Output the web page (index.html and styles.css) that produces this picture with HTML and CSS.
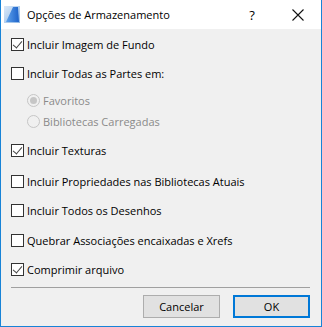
FILE: index.html
```html
<!DOCTYPE html>
<html lang="pt">
<head>
  <meta charset="UTF-8">
  <title>Opções de Armazenamento</title>
  <link rel="stylesheet" href="styles.css">
</head>
<body>
  <div class="dialog">
    <div class="titlebar">
      <svg class="app-icon" width="16" height="17" viewBox="0 0 16 17">
        <defs>
          <linearGradient id="bg" x1="0" y1="0" x2="1" y2="1">
            <stop offset="0" stop-color="#dbe9f8"/>
            <stop offset="1" stop-color="#8fb8e6"/>
          </linearGradient>
          <linearGradient id="sail" x1="0" y1="0" x2="1" y2="0">
            <stop offset="0" stop-color="#5fa3ec"/>
            <stop offset="1" stop-color="#1d62c9"/>
          </linearGradient>
        </defs>
        <rect x="0" y="0" width="16" height="17" fill="url(#bg)"/>
        <path d="M9 1 L14 1 L15 16 L2 16 Z" fill="url(#sail)"/>
      </svg>
      <span class="title">Opções de Armazenamento</span>
      <span class="help">?</span>
      <span class="close">
        <svg width="12" height="12" viewBox="0 0 12 12">
          <path d="M0.5 0.5 L11.5 11.5 M11.5 0.5 L0.5 11.5" stroke="#111" stroke-width="1.1"/>
        </svg>
      </span>
    </div>

    <div class="content">
      <div class="options">
        <div class="row r1"><span class="check on"></span>Incluir Imagem de Fundo</div>
        <div class="row r2"><span class="check"></span>Incluir Todas as Partes em:</div>
        <div class="row radio-row r3"><span class="radio on"></span>Favoritos</div>
        <div class="row radio-row r4"><span class="radio"></span>Bibliotecas Carregadas</div>
        <div class="row r5"><span class="check on"></span>Incluir Texturas</div>
        <div class="row r6"><span class="check"></span>Incluir Propriedades nas Bibliotecas Atuais</div>
        <div class="row r7"><span class="check"></span>Incluir Todos os Desenhos</div>
        <div class="row r8"><span class="check"></span>Quebrar Associações encaixadas e Xrefs</div>
        <div class="row r9"><span class="check on"></span>Comprimir arquivo</div>
      </div>
      <div class="separator"></div>
      <div class="buttons">
        <button class="btn">Cancelar</button>
        <button class="btn default">OK</button>
      </div>
    </div>
  </div>
</body>
</html>
```

FILE: styles.css
```css
* {
  margin: 0;
  padding: 0;
  box-sizing: border-box;
}

body {
  font-family: 'Open Sans', 'Noto Sans', sans-serif;
  font-size: 11px;
  color: #000;
  background: #fff;
}

.dialog {
  width: 322px;
  height: 327px;
  border: 1px solid #1883d7;
  border-top: none;
  background: #f0f0f0;
  display: flex;
  flex-direction: column;
}

.titlebar {
  height: 29px;
  background: #fff;
  display: flex;
  align-items: center;
  padding-left: 3px;
}

.app-icon {
  margin-top: -1px;
}

.title {
  margin-left: 7px;
  font-size: 11px;
  color: #000;
  flex: 1;
}

.help {
  width: 46px;
  text-align: center;
  font-size: 13px;
}

.close {
  width: 46px;
  height: 29px;
  display: flex;
  align-items: center;
  justify-content: center;
}

.content {
  flex: 1;
  padding: 0 10px;
  display: flex;
  flex-direction: column;
}

.options {
  display: flex;
  flex-direction: column;
}

.row {
  display: flex;
  align-items: center;
  height: 16px;
  white-space: nowrap;
}

.r1 { margin-top: 7px; }
.r2 { margin-top: 13px; }
.r3 { margin-top: 11px; }
.r4 { margin-top: 5px; }
.r5 { margin-top: 13px; }
.r6 { margin-top: 15px; }
.r7 { margin-top: 13px; }
.r8 { margin-top: 14px; }
.r9 { margin-top: 13px; }

.radio-row {
  padding-left: 16px;
  color: #8a8a8a;
}

.check {
  width: 13px;
  height: 13px;
  border: 1px solid #333;
  background: #fff;
  margin-right: 3px;
  position: relative;
}

.check.on::after {
  content: "";
  position: absolute;
  left: 3px;
  top: 0;
  width: 4px;
  height: 8px;
  border-right: 1.4px solid #444;
  border-bottom: 1.4px solid #444;
  transform: rotate(40deg);
}

.radio {
  width: 13px;
  height: 13px;
  border: 1px solid #c6c6c6;
  border-radius: 50%;
  background: #f0f0f0;
  margin-right: 3px;
  position: relative;
}

.radio.on::after {
  content: "";
  position: absolute;
  left: 2px;
  top: 2px;
  width: 7px;
  height: 7px;
  border-radius: 50%;
  background: #c6c6c6;
}

.separator {
  height: 1px;
  background: #a0a0a0;
  margin-top: 10px;
  margin-right: 1px;
}

.buttons {
  display: flex;
  justify-content: flex-end;
  gap: 13px;
  margin-top: 7px;
  padding-right: 1px;
}

.btn {
  width: 77px;
  height: 23px;
  font-family: inherit;
  font-size: 11px;
  background: #e1e1e1;
  border: 1px solid #adadad;
  color: #000;
}

.btn.default {
  border: 2px solid #0078d7;
}
```
